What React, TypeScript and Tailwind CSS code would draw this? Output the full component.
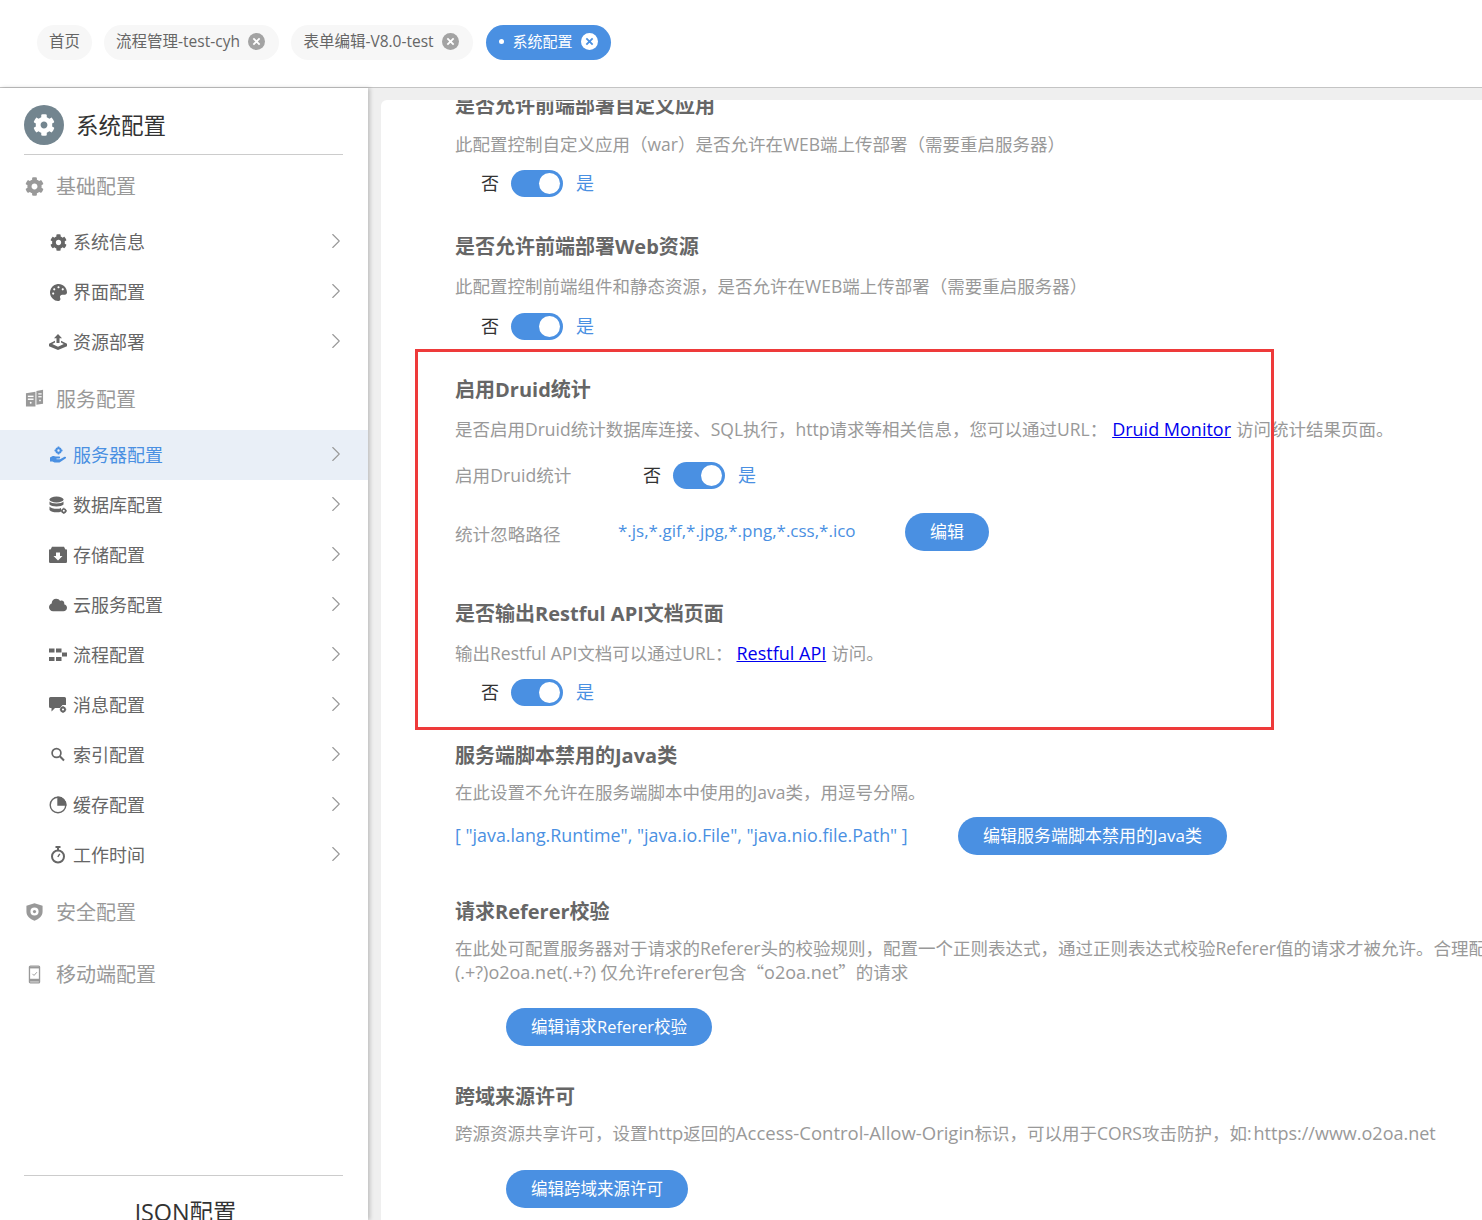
import { ChevronRight } from "lucide-react"
import { FaCog, FaPalette, FaCloud } from "react-icons/fa"

const fontStack = "font-['Open_Sans','Noto_Sans_CJK_SC',sans-serif]"

const Gear = ({ className }: { className?: string }) => <FaCog className={className} />

const DeployIcon = () => (
  <svg viewBox="0 0 18 18" className="w-[18px] h-[18px]" fill="currentColor">
    <path d="M9 1l4 4.300h-2.500V10h-3V5.300H5z" />
    <path d="M6 7.700v1.900L3.200 11 9 13.800 14.800 11 12 9.600V7.700l6 3v2.500L9 17 0 13.200v-2.500z" />
  </svg>
)

const ServerHandIcon = () => (
  <svg viewBox="0 0 18 18" className="w-[18px] h-[18px]" fill="currentColor">
    <circle cx="9.500" cy="4.500" r="2.200" fill="none" stroke="currentColor" strokeWidth="2" />
    <path d="M9.500 0.500v1.500M9.500 7v1.500M5.500 4.500H7M12 4.500h1.500" stroke="currentColor" strokeWidth="1.600" />
    <path d="M1 11.500c2-1.800 4-2 5.800-1h3.400c1.300 0 1.300 2 0 2H7.500v.7h3.500l4.500-2.400c1.500-.5 2.200 1 1 1.800L10.500 16.500H5.500l-2-1H1z" />
  </svg>
)

const DatabaseGearIcon = () => (
  <svg viewBox="0 0 18 18" className="w-[18px] h-[18px]" fill="currentColor">
    <ellipse cx="7.500" cy="3.500" rx="7" ry="3" />
    <path d="M.5 5.500C2 8 13 8 14.500 5.500V8.500C13 11 2 11 .5 8.500z" />
    <path d="M.5 10.500C2 13 10 13.500 12 12v1.500l.5 2c-3.500 1.500-10.500 1-12-1.500z" />
    <circle cx="14.800" cy="14.800" r="1.800" fill="none" stroke="currentColor" strokeWidth="1.600" />
    <path d="M14.800 11.800v1M14.800 16.800v1M11.800 14.800h1M16.800 14.800h1" stroke="currentColor" strokeWidth="1.200" />
  </svg>
)

const StorageIcon = () => (
  <svg viewBox="0 0 18 18" className="w-[18px] h-[18px]" fill="currentColor">
    <path d="M3 .8h12l1.600 3.200H1.400z" />
    <path fillRule="evenodd" d="M0 3.500h18v12.200a1.300 1.300 0 0 1-1.300 1.300H1.300A1.300 1.300 0 0 1 0 15.700zM7 6.500v3.500H4.500L9 14.500l4.500-4.500H11V6.500z" />
  </svg>
)

const FlowIcon = () => (
  <svg viewBox="0 0 18 18" className="w-[18px] h-[18px]" fill="currentColor">
    <rect x="0" y="2.500" width="5.500" height="4" />
    <rect x="7" y="2.500" width="5.500" height="4" />
    <rect x="13" y="6.500" width="5" height="4" />
    <rect x="0" y="11" width="5.500" height="4" />
    <rect x="7" y="11" width="5.500" height="4" />
  </svg>
)

const MessageGearIcon = () => (
  <svg viewBox="0 0 18 18" className="w-[18px] h-[18px]" fill="currentColor">
    <path d="M1.500 1h14A1.500 1.500 0 0 1 17 2.500V9h-3.500L11 12H6l-3.500 3.500V12h-1A1.500 1.500 0 0 1 0 10.500v-8A1.500 1.500 0 0 1 1.500 1z" />
    <circle cx="14" cy="13.500" r="2" fill="none" stroke="currentColor" strokeWidth="1.800" />
    <path d="M14 10.300v1M14 15.700v1M10.800 13.500h1M16.200 13.500h1" stroke="currentColor" strokeWidth="1.300" />
  </svg>
)

const SearchIcon = () => (
  <svg viewBox="0 0 18 18" className="w-[18px] h-[18px]" fill="none" stroke="currentColor" strokeWidth="1.700">
    <circle cx="7.500" cy="7" r="4.400" />
    <path d="M10.800 10.300L15 14.500" strokeWidth="2" />
  </svg>
)

const PieIcon = () => (
  <svg viewBox="0 0 18 18" className="w-[18px] h-[18px]" fill="none" stroke="currentColor" strokeWidth="1.400">
    <circle cx="9" cy="9" r="7.800" />
    <path d="M9 9V1.200A7.800 7.800 0 0 1 16.800 9z" fill="currentColor" />
  </svg>
)

const TimerIcon = () => (
  <svg viewBox="0 0 18 18" className="w-[18px] h-[18px]" fill="none" stroke="currentColor" strokeWidth="2">
    <circle cx="9" cy="10.500" r="6" />
    <path d="M6.500 1h5M9 1v3" />
    <path d="M8.800 10.800l2-3" strokeWidth="1.400" />
  </svg>
)

const ServiceGroupIcon = () => (
  <svg viewBox="0 0 20 20" className="w-[19px] h-[19px]" fill="currentColor">
    <path d="M1 4.500l10-1.500V18.500H1z" />
    <path d="M12 2l7-1.200V15.500l-7 1z" />
    <rect x="3" y="7" width="6" height="1.500" fill="#fff" />
    <rect x="3" y="10" width="6" height="1.500" fill="#fff" />
    <circle cx="6" cy="14.500" r="1" fill="#fff" />
    <rect x="14" y="4.500" width="3.500" height="1.300" fill="#fff" />
    <rect x="14" y="7.500" width="3.500" height="1.300" fill="#fff" />
    <circle cx="15.800" cy="12" r=".9" fill="#fff" />
  </svg>
)

const ShieldIcon = () => (
  <svg viewBox="0 0 20 20" className="w-[20px] h-[20px]" fill="currentColor">
    <path fillRule="evenodd" d="M10 .8l8.500 2.700V9.500c0 4.800-3.800 8-8.500 9.700C5.300 17.500 1.500 14.300 1.500 9.500V3.500zM10 5.200a4.300 4.300 0 1 0 0 8.600 4.300 4.300 0 0 0 0-8.600z" />
    <circle cx="10" cy="9.500" r="1.700" />
  </svg>
)

const MobileIcon = () => (
  <svg viewBox="0 0 20 20" className="w-[19px] h-[19px]" fill="none" stroke="currentColor" strokeWidth="1.400">
    <rect x="4.700" y="1.200" width="10.600" height="17.600" rx="1" />
    <path d="M4.700 16h10.600" strokeWidth="3" />
    <path d="M4.700 2.700h10.600" strokeWidth="1.800" />
    <path d="M7.800 9.300l1.700 1.700 3-3.400" strokeWidth="1" />
  </svg>
)

const CloseDot = ({ active }: { active?: boolean }) => (
  <span className={`flex items-center justify-center w-[17px] h-[17px] rounded-full ${active ? "bg-white text-[#4a90e2]" : "bg-[#a3a3a3] text-white"}`}>
    <svg viewBox="0 0 10 10" className="w-[9px] h-[9px]" fill="none" stroke="currentColor" strokeWidth="2">
      <path d="M1.500 1.500l7 7M8.500 1.500l-7 7" />
    </svg>
  </span>
)

const Tab = ({ label, w, closable = true }: { label: string; w: string; closable?: boolean }) => (
  <div className={`h-[35px] rounded-full bg-[#f7f7f7] text-[#666] text-[15.500px] flex items-center justify-center gap-2 pb-[2px] ${w} ${closable ? "pr-[2px]" : ""}`}>
    <span>{label}</span>
    {closable && <CloseDot />}
  </div>
)

const SideItem = ({ icon, label, active }: { icon: React.ReactNode; label: string; active?: boolean }) => (
  <div className={`h-[50px] pl-[49px] pr-[19px] flex items-center ${active ? "bg-[#e9eff7] text-[#4a90e2]" : "text-[#666]"}`}>
    <span className="w-[18px] h-[18px] flex items-center justify-center">{icon}</span>
    <span className="ml-[6px] text-[18px] flex-1">{label}</span>
    <ChevronRight className="w-[26px] h-[26px] text-[#999] -mt-[2px]" strokeWidth={1} />
  </div>
)

const SideGroup = ({ icon, label, className }: { icon: React.ReactNode; label: string; className: string }) => (
  <div className={`flex items-center pl-[25px] text-[#999] pt-[2px] ${className}`}>
    <span className="w-[19px] h-[20px] flex items-center justify-center -mt-[2px]">{icon}</span>
    <span className="ml-[12px] text-[20px]">{label}</span>
  </div>
)

const Toggle = () => (
  <div className="flex items-center">
    <span className="text-[18px] text-[#333] w-[18px]">否</span>
    <span className="ml-[12px] w-[52px] h-[27px] rounded-full bg-[#4a90e2] flex items-center justify-end pr-[3px]">
      <span className="w-[21px] h-[21px] rounded-full bg-white" />
    </span>
    <span className="ml-[13px] text-[18px] text-[#4a90e2]">是</span>
  </div>
)

const Title = ({ children }: { children: React.ReactNode }) => (
  <div className="h-10 pt-[2px] flex items-center text-[20px] font-bold text-[#666] whitespace-nowrap">{children}</div>
)

const Desc = ({ children, className }: { children: React.ReactNode; className: string }) => (
  <div className={`h-8 flex items-center text-[17.500px] text-[#999] whitespace-nowrap ${className}`}>{children}</div>
)

const Btn = ({ children, size = "text-[17px]" }: { children: React.ReactNode; size?: string }) => (
  <div className={`h-[38px] px-[25px] rounded-full bg-[#4a90e2] text-white flex items-center whitespace-nowrap ${size}`}>{children}</div>
)

export default function App() {
  return (
    <div className={`relative w-[1482px] h-[1220px] overflow-hidden bg-white flex flex-col ${fontStack}`}>
      <div className="h-[88px] shrink-0 bg-white border-b border-[#c4c4c4] pl-[37px] pt-[25px] flex items-start gap-3">
        <Tab label="首页" w="w-[55px]" closable={false} />
        <Tab label="流程管理-test-cyh" w="w-[175px]" />
        <Tab label="表单编辑-V8.0-test" w="w-[182px]" />
        <div className="ml-px w-[125px] h-[35px] rounded-full bg-[#4a90e2] text-white text-[15px] flex items-center justify-center gap-2 pb-[2px]">
          <span className="w-[5px] h-[5px] rounded-full bg-white" />
          <span>系统配置</span>
          <CloseDot active />
        </div>
      </div>

      <div className="flex flex-1 min-h-0">
        <aside className="w-[368px] shrink-0 bg-white shadow-[2px_0_4px_rgba(0,0,0,0.2)] z-10 flex flex-col">
          <div className="ml-6 w-[319px] h-[67px] border-b border-[#ccc] flex items-start pt-[17px]">
            <span className="w-10 h-10 rounded-full bg-[#73858f] flex items-center justify-center text-white">
              <Gear className="w-[22px] h-[22px]" />
            </span>
            <span className="ml-[12px] text-[22.500px] leading-[42px] text-[#333]">系统配置</span>
          </div>
          <SideGroup icon={<Gear className="w-[19px] h-[19px]" />} label="基础配置" className="h-[62px]" />
          <div>
            <SideItem icon={<Gear className="w-[17px] h-[17px]" />} label="系统信息" />
            <SideItem icon={<FaPalette className="w-[17px] h-[17px]" />} label="界面配置" />
            <SideItem icon={<DeployIcon />} label="资源部署" />
          </div>
          <SideGroup icon={<ServiceGroupIcon />} label="服务配置" className="h-[63px]" />
          <div>
            <SideItem icon={<ServerHandIcon />} label="服务器配置" active />
            <SideItem icon={<DatabaseGearIcon />} label="数据库配置" />
            <SideItem icon={<StorageIcon />} label="存储配置" />
            <SideItem icon={<FaCloud className="w-[18px] h-[18px]" />} label="云服务配置" />
            <SideItem icon={<FlowIcon />} label="流程配置" />
            <SideItem icon={<MessageGearIcon />} label="消息配置" />
            <SideItem icon={<SearchIcon />} label="索引配置" />
            <SideItem icon={<PieIcon />} label="缓存配置" />
            <SideItem icon={<TimerIcon />} label="工作时间" />
          </div>
          <SideGroup icon={<ShieldIcon />} label="安全配置" className="h-[64px]" />
          <SideGroup icon={<MobileIcon />} label="移动端配置" className="h-[60px]" />
          <div className="mt-auto ml-6 w-[319px] h-[45px] border-t border-[#ccc] flex justify-center text-[23.400px] text-[#333] pt-[20px] pl-[4px] leading-[32px]">
            JSON配置
          </div>
        </aside>

        <main className="flex-1 min-w-0 bg-[#efefef] pl-[13px] pt-3">
          <div className="bg-white h-full rounded-tl-[6px] overflow-hidden pl-[74px]">
            <div className="-mt-[15px]">
              <Title>是否允许前端部署自定义应用</Title>
              <Desc className="mt-[3px]">此配置控制自定义应用（war）是否允许在WEB端上传部署（需要重启服务器）</Desc>
              <div className="h-8 flex items-center mt-[7px] pl-[26px] mb-[27px]"><Toggle /></div>

              <Title>是否允许前端部署Web资源</Title>
              <Desc className="mt-1">此配置控制前端组件和静态资源，是否允许在WEB端上传部署（需要重启服务器）</Desc>
              <div className="h-8 flex items-center mt-2 pl-[26px] mb-[27px]"><Toggle /></div>

              <Title>启用Druid统计</Title>
              <Desc className="mt-1">
                是否启用Druid统计数据库连接、SQL执行，http请求等相关信息，您可以通过URL：
                <a className="text-[#0000ee] underline text-[18px] ml-[5px]">Druid Monitor</a>
                <span className="ml-[5px]">访问统计结果页面。</span>
              </Desc>
              <div className="h-8 flex items-center mt-[14px]">
                <span className="w-[188px] text-[17.600px] text-[#999]">启用Druid统计</span>
                <Toggle />
              </div>
              <div className="h-[38px] flex items-center mt-[22px] mb-[42px]">
                <span className="w-[163px] text-[17.600px] text-[#999] pt-1">统计忽略路径</span>
                <span className="w-[287px] text-[17px] text-[#4a90e2] pb-[2px]">*.js,*.gif,*.jpg,*.png,*.css,*.ico</span>
                <Btn>编辑</Btn>
              </div>

              <Title>是否输出Restful API文档页面</Title>
              <Desc className="mt-1">
                输出Restful API文档可以通过URL：
                <a className="text-[#0000ee] underline text-[18px] ml-[4px]">Restful API</a>
                <span className="ml-[5px]">访问。</span>
              </Desc>
              <div className="h-8 flex items-center mt-[7px] pl-[26px] mb-[27px]"><Toggle /></div>

              <Title>服务端脚本禁用的Java类</Title>
              <Desc className="mt-px">在此设置不允许在服务端脚本中使用的Java类，用逗号分隔。</Desc>
              <div className="h-[38px] flex items-center mt-[9px] mb-9">
                <span className="w-[503px] text-[17.850px] text-[#4a90e2] pb-[2px]">[ "java.lang.Runtime", "java.io.File", "java.nio.file.Path" ]</span>
                <Btn>编辑服务端脚本禁用的Java类</Btn>
              </div>

              <Title>请求Referer校验</Title>
              <div className="mt-[5px] text-[17.500px] leading-6 text-[#999] whitespace-nowrap">
                在此处可配置服务器对于请求的Referer头的校验规则，配置一个正则表达式，通过正则表达式校验Referer值的请求才被允许。合理配置可防止跨站请求伪造。
                <br />
                <span className="text-[18px]">(.+?)o2oa.net(.+?)</span> 仅允许<span className="text-[18px]">referer</span>包含<span className="font-['Noto_Sans_CJK_SC']">“</span><span className="text-[18px]">o2oa.net</span><span className="font-['Noto_Sans_CJK_SC']">”</span>的请求
              </div>
              <div className="mt-6 mb-[30px] ml-[51px] flex">
                <Btn size="text-[16.500px]">编辑请求Referer校验</Btn>
              </div>

              <Title>跨域来源许可</Title>
              <Desc className="mt-px">
                跨源资源共享许可，设置<span className="text-[18.500px]">http</span>返回的<span className="text-[18.500px]">Access-Control-Allow-Origin</span>标识，可以用于CORS攻击防护，如:<span className="text-[18px] ml-[2px]">https://www.o2oa.net</span>
              </Desc>
              <div className="mt-[21px] ml-[51px] flex">
                <Btn size="text-[16.500px]">编辑跨域来源许可</Btn>
              </div>
            </div>
          </div>
        </main>
      </div>

      <div className="absolute left-[415px] top-[349px] w-[859px] h-[381px] border-[3px] border-[#ee3a3a] pointer-events-none z-20" />
    </div>
  )
}
